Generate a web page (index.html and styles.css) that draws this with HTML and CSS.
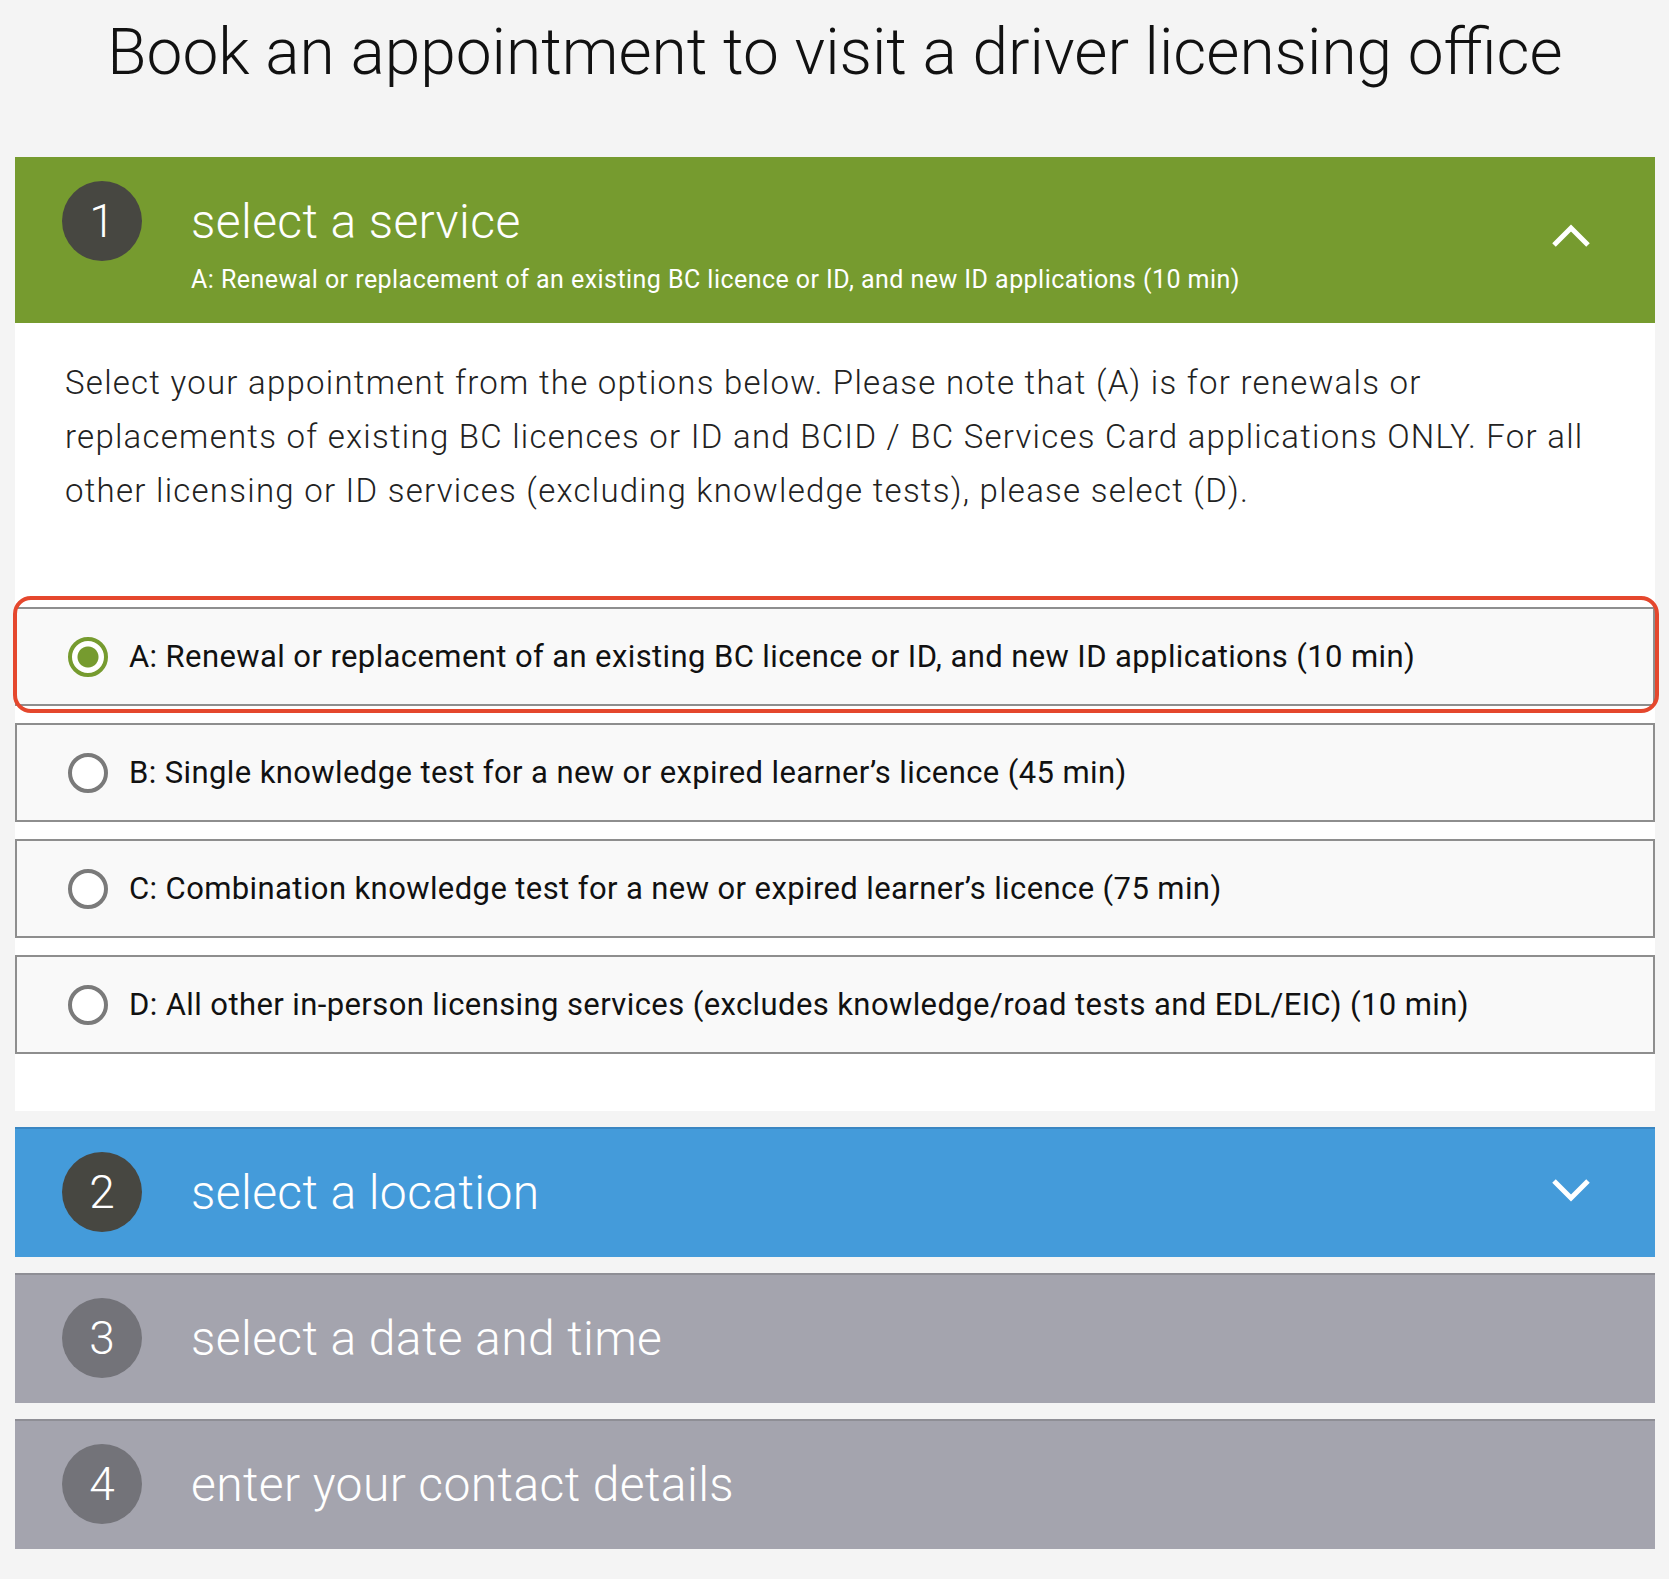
FILE: index.html
```html
<!DOCTYPE html>
<html lang="en">
<head>
    <meta charset="UTF-8">
    <meta name="viewport" content="width=device-width, initial-scale=1.0">
    <title>Book an appointment</title>
    <link rel="stylesheet" href="styles.css">
</head>
<body>

<h1 class="page-title">Book an appointment to visit a driver licensing office</h1>

<div class="steps">
    <section class="step">
        <div class="step-header step-open">
            <span class="step-num">1</span>
            <div class="step-heading">
                <h2>select a service</h2>
                <p class="step-summary">A: Renewal or replacement of an existing BC licence or ID, and new ID applications (10 min)</p>
            </div>
            <svg class="chevron" width="40" height="26" viewBox="0 0 40 26">
                <polyline points="3,22 20,5 37,22" fill="none" stroke="#fff" stroke-width="5"/>
            </svg>
        </div>

        <div class="step-body">
            <p class="intro">Select your appointment from the options below. Please note that (A) is for renewals or replacements of existing BC licences or ID and BCID / BC Services Card applications ONLY. For all other licensing or ID services (excluding knowledge tests), please select (D).</p>

            <div class="options">
                <label class="option">
                    <input type="radio" name="service" value="A" checked>
                    <span>A: Renewal or replacement of an existing BC licence or ID, and new ID applications (10 min)</span>
                    <span class="highlight"></span>
                </label>
                <label class="option">
                    <input type="radio" name="service" value="B">
                    <span>B: Single knowledge test for a new or expired learner’s licence (45 min)</span>
                </label>
                <label class="option">
                    <input type="radio" name="service" value="C">
                    <span>C: Combination knowledge test for a new or expired learner’s licence (75 min)</span>
                </label>
                <label class="option">
                    <input type="radio" name="service" value="D">
                    <span>D: All other in-person licensing services (excludes knowledge/road tests and EDL/EIC) (10 min)</span>
                </label>
            </div>
        </div>
    </section>

    <section class="step">
        <div class="step-header step-blue">
            <span class="step-num">2</span>
            <div class="step-heading">
                <h2>select a location</h2>
            </div>
            <svg class="chevron" width="40" height="26" viewBox="0 0 40 26">
                <polyline points="3,4 20,21 37,4" fill="none" stroke="#fff" stroke-width="5"/>
            </svg>
        </div>
    </section>

    <section class="step">
        <div class="step-header step-grey">
            <span class="step-num">3</span>
            <div class="step-heading">
                <h2>select a date and time</h2>
            </div>
        </div>
    </section>

    <section class="step">
        <div class="step-header step-grey">
            <span class="step-num">4</span>
            <div class="step-heading">
                <h2>enter your contact details</h2>
            </div>
        </div>
    </section>
</div>

</body>
</html>
```

FILE: styles.css
```css
* {
    box-sizing: border-box;
}
body {
    margin: 0;
    padding: 0 14px 31px 15px;
    background: #f4f4f4;
    font-family: Roboto, "Noto Sans", sans-serif;
    color: #111;
}
.page-title {
    margin: 0;
    padding: 21px 0 72px;
    font-size: 64px;
    line-height: 64px;
    font-weight: 300;
    text-align: center;
    color: #111;
}
.steps {
    display: flex;
    flex-direction: column;
    gap: 16px;
}

/* step headers */
.step-header {
    display: flex;
    align-items: center;
    padding: 23px 64px 25px 47px;
    border-top: 2px solid transparent;
    color: #fff;
}
.step-num {
    flex-shrink: 0;
    width: 80px;
    height: 80px;
    border-radius: 50%;
    background: #474741;
    display: flex;
    align-items: center;
    justify-content: center;
    font-size: 46px;
    font-weight: 300;
}
.step-heading {
    flex: 1;
    margin-left: 49px;
}
.step-heading h2 {
    margin: 0;
    font-size: 48px;
    line-height: 55px;
    font-weight: 300;
    letter-spacing: 0.4px;
}
.step-open {
    align-items: flex-start;
    height: 166px;
    padding-top: 22px;
    background: #769b2f;
    border-top-color: #769b2f;
}
.step-open .step-heading {
    margin-top: 13px;
}
.step-summary {
    margin: 17px 0 0;
    font-size: 25px;
    line-height: 28px;
    font-weight: 400;
    letter-spacing: 0.45px;
}
.step-open .chevron {
    align-self: center;
    margin-bottom: 7px;
}
.step-blue .chevron {
    margin-bottom: 4px;
}
.step-blue {
    background: #449bda;
    border-top-color: #3a86c2;
}
.step-grey {
    background: #a4a4ae;
    border-top-color: #8e8e95;
}
.step-grey .step-num {
    background: #737379;
}

/* step body */
.step-body {
    background: #fff;
    padding: 33px 0 57px;
}
.intro {
    margin: 0 55px 89px 50px;
    font-size: 33px;
    line-height: 54px;
    font-weight: 300;
    letter-spacing: 1.25px;
    color: #222;
}
.options {
    display: flex;
    flex-direction: column;
    gap: 17px;
}
.option {
    position: relative;
    display: flex;
    align-items: center;
    height: 99px;
    padding-left: 51px;
    background: #f9f9f9;
    border: 2px solid #8e8e8e;
    font-size: 31px;
    letter-spacing: 0.4px;
    color: #111;
    cursor: pointer;
}
.option input {
    appearance: none;
    -webkit-appearance: none;
    flex-shrink: 0;
    width: 40px;
    height: 40px;
    margin: 0 21px 0 0;
    border: 4px solid #7a7a7a;
    border-radius: 50%;
    background: #fff;
}
.option input:checked {
    border-color: #769b2f;
    background: radial-gradient(circle, #769b2f 0 10px, #fff 11px);
}
.highlight {
    position: absolute;
    top: -13px;
    left: -4px;
    right: -6px;
    bottom: -9px;
    border: 4px solid #e5472d;
    border-radius: 18px;
    pointer-events: none;
}
```
